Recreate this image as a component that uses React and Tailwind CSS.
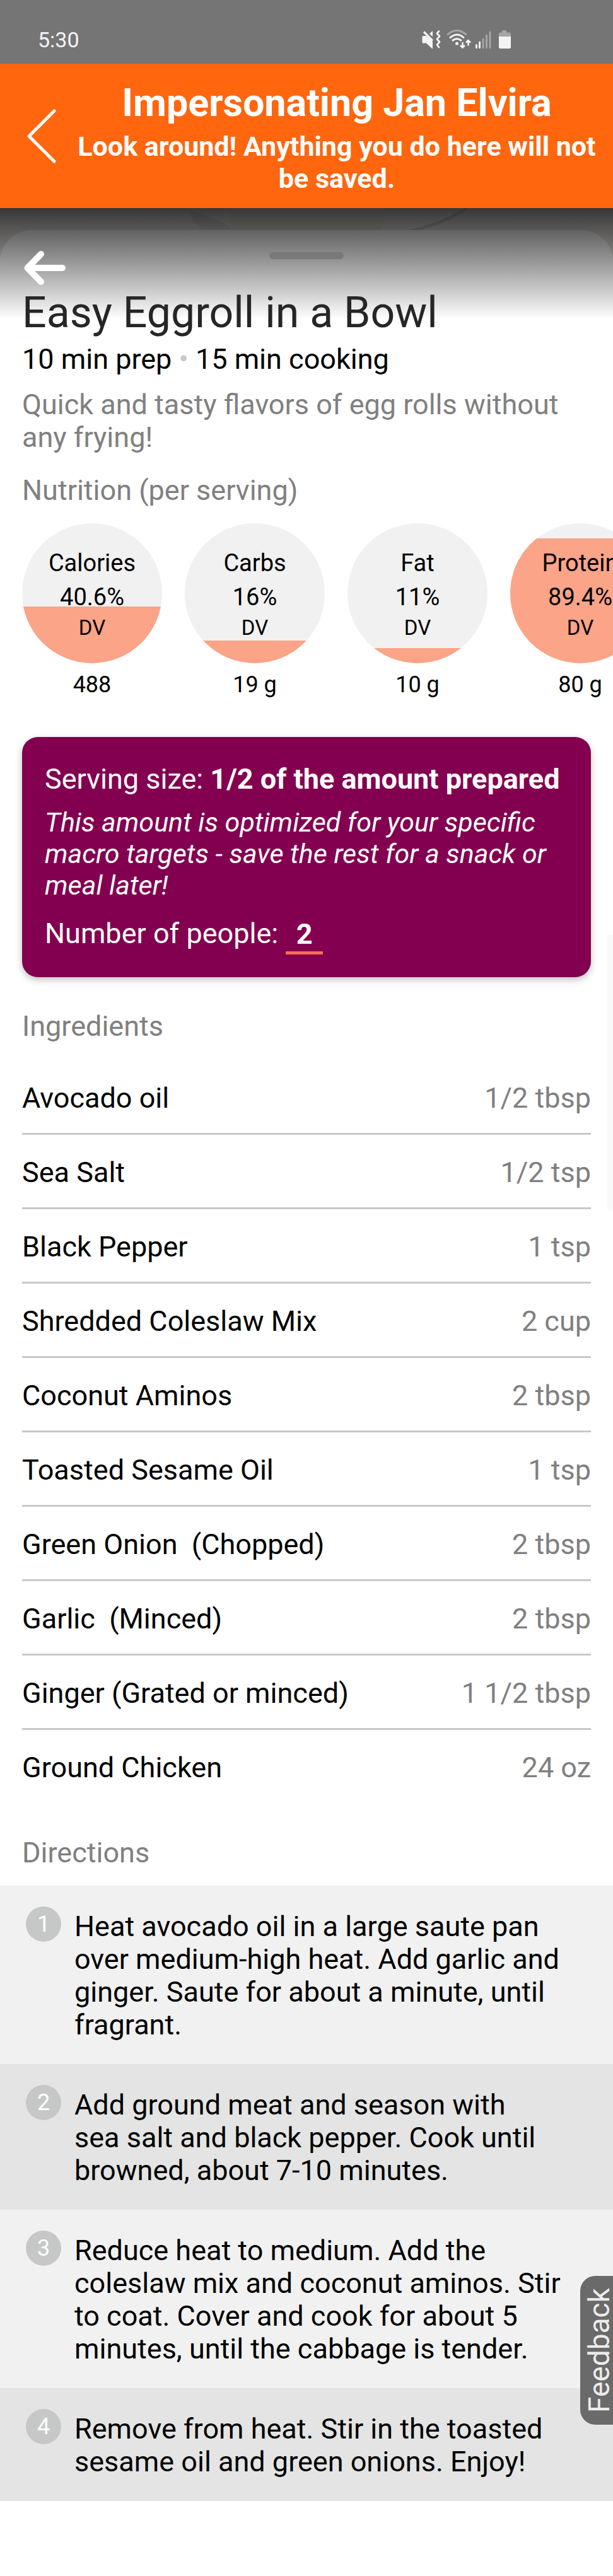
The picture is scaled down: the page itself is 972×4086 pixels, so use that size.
import React from 'react';

const NUTRIENTS = [
  { name: 'Calories', percent: 40.6, amount: '488' },
  { name: 'Carbs', percent: 16, amount: '19 g' },
  { name: 'Fat', percent: 11, amount: '10 g' },
  { name: 'Protein', percent: 89.4, amount: '80 g' },
];

const INGREDIENTS = [
  ['Avocado oil', '1/2 tbsp'],
  ['Sea Salt', '1/2 tsp'],
  ['Black Pepper', '1 tsp'],
  ['Shredded Coleslaw Mix', '2 cup'],
  ['Coconut Aminos', '2 tbsp'],
  ['Toasted Sesame Oil', '1 tsp'],
  ['Green Onion  (Chopped)', '2 tbsp'],
  ['Garlic  (Minced)', '2 tbsp'],
  ['Ginger (Grated or minced)', '1 1/2 tbsp'],
  ['Ground Chicken', '24 oz'],
];

const STEPS = [
  'Heat avocado oil in a large saute pan over medium-high heat. Add garlic and ginger. Saute for about a minute, until fragrant.',
  'Add ground meat and season with sea\u00a0salt and black pepper. Cook until browned, about 7-10 minutes.',
  'Reduce heat to medium. Add the coleslaw mix and coconut aminos. Stir to coat. Cover and cook for about 5 minutes, until the cabbage is tender.',
  'Remove from heat. Stir in the toasted sesame oil and green onions. Enjoy!',
];

function StatusIcons() {
  return (
    <svg width="144" height="32" viewBox="0 0 144 32" fill="none" aria-hidden="true">
      <path d="M3 10h5l10 9v11h-1l-9-8.500H3q-1.500 0-1.500-1.500v-8.500q0-1.500 1.500-1.500zM18 2v9l-5-4.500z" fill="#f4f4f4" />
      <path d="M4 3.500l14 14" stroke="#f4f4f4" strokeWidth="3.200" />
      <path d="M28 2.500l-3 3.500 4 4.500-4 4.500 4 4.500-4 4.500 3 4" stroke="#f4f4f4" strokeWidth="2.800" strokeLinecap="round" strokeLinejoin="round" />
      <path d="M42 7.500q14-12 29 0" stroke="#a6a6a6" strokeWidth="3" strokeLinecap="round" />
      <path d="M46 12.500q11-9 21 0M50 17q6-5 13 0" stroke="#f4f4f4" strokeWidth="3" strokeLinecap="round" />
      <circle cx="56.500" cy="22" r="2.500" fill="#f4f4f4" />
      <path d="M65.500 20v8M62 25l3.500 3.500L69 25M74.500 25.500v-8M71 20.500l3.500-3.500 3.500 3.500" stroke="#f4f4f4" strokeWidth="2.500" />
      <path d="M87.500 24.500v4M92.500 20v8.500" stroke="#f4f4f4" strokeWidth="3" strokeLinecap="round" />
      <path d="M98 15v13.500M103.500 9v19.500M109 4v24.500" stroke="#a6a6a6" strokeWidth="3" strokeLinecap="round" />
      <path d="M128 1h7v3.500h5q2 0 2 2V11h-19V6.500q0-2 2-2h3z" fill="#a6a6a6" />
      <path d="M123 11h19v17q0 2-2 2h-15q-2 0-2-2z" fill="#f4f4f4" />
    </svg>
  );
}

function Nutrient({ name, percent, amount }) {
  return (
    <li className="flex w-[222px] shrink-0 flex-col items-center">
      <div className="relative flex size-[222px] flex-col items-center overflow-hidden rounded-full bg-[#f1f1f1] pt-9">
        <div className="absolute inset-x-0 bottom-0 bg-[#fba488]" style={{ height: `${percent}%` }} />
        <span className="relative text-[38px] leading-[54px]">{name}</span>
        <span className="relative text-[38px] leading-[54px]">{percent}%</span>
        <span className="relative text-[33px] leading-[44px]">DV</span>
      </div>
      <span className="pt-3 text-[36px] leading-[44px]">{amount}</span>
    </li>
  );
}

export default function App() {
  return (
    <div className="relative min-h-screen bg-white font-['Roboto',sans-serif] text-[45px] leading-[52px] text-black">
      <header>
        <div className="flex h-[101px] items-center justify-between bg-[#757575] pt-6 pr-[160px] pl-[60px] text-[34px] text-[#f4f4f4]">
          <span>5:30</span>
          <StatusIcons />
        </div>
        <div className="flex h-[229px] items-center bg-[#ff660d] text-white">
          <button type="button" aria-label="Go back" className="flex w-[120px] shrink-0 justify-center pl-3">
            <svg width="48" height="86" viewBox="0 0 48 86" fill="none" aria-hidden="true">
              <path d="M44 3L4 43l40 40" stroke="#fff" strokeWidth="5" strokeLinecap="round" strokeLinejoin="round" />
            </svg>
          </button>
          <div className="flex-1 self-start pt-[26px] pr-6 text-center font-bold">
            <p className="pb-2 text-[61px] leading-[72px]">Impersonating Jan Elvira</p>
            <p className="text-[43px] leading-[51px]">Look around! Anything you do here will not be saved.</p>
          </div>
        </div>
      </header>

      <main>
        <div className="relative h-[176px] overflow-hidden bg-[#dedcd7]">
          <svg className="absolute top-0 left-1/2 -translate-x-1/2" width="972" height="40" viewBox="0 0 972 40" fill="none" aria-hidden="true">
            <path d="M300 4q40 8 70 30h-50q-20-18-20-30z" fill="#cfceca" />
            <path d="M362 2h250l-8 34H370z" fill="#d9d6ce" />
            <path d="M740 0q-38 26-90 36" stroke="#c4c3be" strokeWidth="5" />
          </svg>
          <div className="absolute inset-x-0 top-[35px] bottom-0 rounded-t-[50px] bg-[#f4f4f4]" />
          <div className="absolute inset-0 bg-linear-to-b from-transparent from-30% to-white" />
          <div className="absolute inset-0 bg-linear-to-b from-black/75 to-transparent" />
          <div className="absolute top-[70px] left-1/2 h-[11px] w-[118px] -translate-x-1/2 rounded-full bg-[#797979]" />
          <button type="button" aria-label="Close recipe" className="absolute top-[66px] left-[36px]">
            <svg width="68" height="58" viewBox="0 0 68 58" fill="none" aria-hidden="true">
              <path d="M29 7L7.500 29 29 51M7.500 29H63" stroke="#fff" strokeWidth="10" strokeLinecap="round" strokeLinejoin="round" />
            </svg>
          </button>
        </div>

        <section className="relative -mt-[50px] px-[35px]">
          <h1 className="text-[68px] leading-[80px] text-[#262626]">Easy Eggroll in a Bowl</h1>
          <p className="pt-2">
            10 min prep <span className="text-[#c8c8c8]">•</span> 15 min cooking
          </p>
          <p className="pt-5 text-[#808080]">Quick and tasty flavors of egg rolls without any frying!</p>
          <h2 className="pt-8 text-[#808080]">Nutrition (per serving)</h2>
        </section>

        <ul className="mt-[26px] flex gap-9 overflow-hidden pl-[35px]">
          {NUTRIENTS.map((n) => (
            <Nutrient key={n.name} {...n} />
          ))}
        </ul>

        <section className="mx-[35px] mt-[61px] rounded-[25px] bg-[#82004f] px-9 pt-[41px] pb-9 text-white shadow-[0_4px_12px_rgba(0,0,0,0.25)]">
          <p>
            Serving size: <strong>1/2 of the amount prepared</strong>
          </p>
          <p className="pt-[17px] text-[43px] leading-[50px] italic">
            This amount is optimized for your specific macro targets - save the rest for a snack or meal later!
          </p>
          <div className="flex items-start pt-6">
            <label htmlFor="people" className="leading-[56px]">Number of people:</label>
            <input
              id="people"
              type="text"
              inputMode="numeric"
              defaultValue="2"
              className="ml-3 h-[61px] w-[59px] border-b-[5px] border-[#f56f51] bg-transparent text-center font-bold outline-none"
            />
          </div>
        </section>

        <section className="px-[35px] pt-[52px]">
          <h2 className="text-[#808080]">Ingredients</h2>
          <table className="mt-7 w-full border-separate border-spacing-0">
            <tbody>
              {INGREDIENTS.map(([name, amount]) => (
                <tr key={name} className="group h-[118px]">
                  <th scope="row" className="border-b-[3px] border-[#c8c8c8] pt-1 text-left font-normal whitespace-pre group-last:border-transparent">
                    {name}
                  </th>
                  <td className="border-b-[3px] border-[#c8c8c8] pt-1 text-right text-[#808080] group-last:border-transparent">{amount}</td>
                </tr>
              ))}
            </tbody>
          </table>
        </section>

        <section className="pt-[51px]">
          <h2 className="px-[35px] pb-[26px] text-[#808080]">Directions</h2>
          <ol>
            {STEPS.map((step, i) => (
              <li key={step} className="flex gap-[21px] bg-[#f1f1f1] pt-[33px] pr-[62px] pb-9 pl-[41px] even:bg-[#e4e4e4]">
                <span className="flex size-14 shrink-0 items-center justify-center rounded-full bg-[#c6c8c7] text-[36px] text-white">
                  {i + 1}
                </span>
                <p className="pt-[6px]">{step}</p>
              </li>
            ))}
          </ol>
        </section>
      </main>

      <div className="absolute top-[1483px] right-0 h-[437px] w-[9px] bg-[#f9f9f9]" />
      <button
        type="button"
        className="absolute top-[3610px] right-0 flex h-[236px] w-[52px] rotate-180 items-center justify-center rounded-r-[24px] bg-[#6a6a6a] pr-[8px] text-[46px] text-[#ececec] [writing-mode:vertical-rl]"
      >
        Feedback
      </button>
    </div>
  );
}
